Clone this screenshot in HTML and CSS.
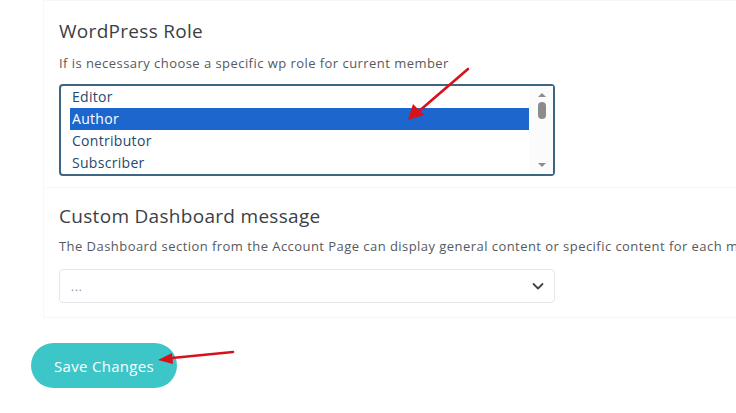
FILE: index.html
```html
<!DOCTYPE html>
<html lang="en">
<head>
    <meta charset="UTF-8">
    <meta name="viewport" content="width=device-width, initial-scale=1.0">
    <title>Member Settings</title>
    <link rel="stylesheet" href="styles.css">
</head>
<body>

<div class="page">
    <div class="section section-role">
        <h3>WordPress Role</h3>
        <p class="hint">If is necessary choose a specific wp role for current member</p>
        <div class="listbox">
            <ul class="options">
                <li>Editor</li>
                <li class="selected">Author</li>
                <li>Contributor</li>
                <li>Subscriber</li>
            </ul>
            <div class="scrollbar">
                <span class="arrow-up"></span>
                <span class="thumb"></span>
                <span class="arrow-down"></span>
            </div>
        </div>
    </div>

    <div class="section section-dashboard">
        <h3>Custom Dashboard message</h3>
        <p class="hint">The Dashboard section from the Account Page can display general content or specific content for each member</p>
        <div class="dropdown">
            <span class="value">...</span>
            <svg class="chevron" width="14" height="14" viewBox="0 0 14 14">
                <path d="M2.5 5 L7 9.5 L11.5 5" fill="none" stroke="#444" stroke-width="1.8" stroke-linecap="round" stroke-linejoin="round"/>
            </svg>
        </div>
    </div>

    <button type="button" class="save-btn">Save Changes</button>

    <!-- annotation arrows drawn over the screenshot -->
    <svg class="annotations" width="736" height="413" viewBox="0 0 736 413">
        <line x1="468" y1="69" x2="418" y2="112" stroke="#d8121c" stroke-width="2.6" stroke-linecap="round"/>
        <polygon points="408,120 413,104 424,115" fill="#d8121c"/>
        <line x1="233" y1="352" x2="172" y2="358" stroke="#d8121c" stroke-width="2.6" stroke-linecap="round"/>
        <polygon points="158,360 172,353 173,364" fill="#d8121c"/>
    </svg>
</div>

</body>
</html>
```

FILE: styles.css
```css
body {
    font-family: "Open Sans", Arial, sans-serif;
    background-color: #fff;
    margin: 0;
    overflow: hidden;
    width: 736px;
    height: 413px;
}

.page {
    position: relative;
    width: 736px;
    height: 413px;
    overflow: hidden;
}

.section {
    margin-left: 43px;
    width: 760px;
    padding: 0 15px;
    border: 1px solid #f6f7f9;
    border-right: none;
    box-sizing: border-box;
}

.section-role {
    padding-top: 18px;
    padding-bottom: 11px;
}

.section-dashboard {
    border-top: none;
    padding-top: 16px;
    padding-bottom: 14px;
}

.section h3 {
    margin: 0;
    font-size: 19px;
    line-height: 24px;
    font-weight: 500;
    letter-spacing: 0.3px;
    color: #3b3f45;
}

.hint {
    margin: 10px 0 11px;
    font-size: 13px;
    line-height: 20px;
    letter-spacing: 0.45px;
    color: #555a5f;
    white-space: nowrap;
}

.section-dashboard .hint {
    margin: 8px 0 13px;
}

.listbox {
    display: flex;
    width: 496px;
    height: 92px;
    border: 2px solid #3d6682;
    border-radius: 4px;
    box-sizing: border-box;
    background-color: #fff;
}

.options {
    list-style: none;
    margin: 0;
    padding: 0 0 0 9px;
    flex: 1;
}

.options li {
    height: 22px;
    line-height: 22px;
    padding-left: 2px;
    font-size: 14px;
    letter-spacing: 0.3px;
    color: #244a6c;
}

.options li.selected {
    background-color: #1d66cd;
    color: #fff;
}

.scrollbar {
    position: relative;
    width: 22px;
    background-color: #fbfbfb;
    display: flex;
    flex-direction: column;
    align-items: center;
    padding-left: 2px;
}

.arrow-up,
.arrow-down {
    width: 0;
    height: 0;
    border-left: 4px solid transparent;
    border-right: 4px solid transparent;
}

.arrow-up {
    margin-top: 7px;
    border-bottom: 4px solid #8c8c8c;
}

.arrow-down {
    margin-top: auto;
    margin-bottom: 7px;
    border-top: 4px solid #8c8c8c;
}

.thumb {
    margin-top: 5px;
    width: 8px;
    height: 17px;
    border-radius: 4px;
    background-color: #8c8c8c;
}

.dropdown {
    display: flex;
    align-items: center;
    justify-content: space-between;
    width: 496px;
    height: 34px;
    padding: 0 9px 0 11px;
    border: 1px solid #e3e7ec;
    border-radius: 4px;
    box-sizing: border-box;
}

.dropdown .value {
    font-size: 11px;
    color: #777;
    letter-spacing: 1px;
}

.save-btn {
    display: block;
    margin: 25px 0 0 31px;
    width: 146px;
    height: 45px;
    border: none;
    border-radius: 23px;
    background-color: #3dc6c8;
    color: #fff;
    font-family: "Open Sans", Arial, sans-serif;
    font-size: 15px;
    font-weight: 500;
    letter-spacing: 0.3px;
    cursor: pointer;
}

.annotations {
    position: absolute;
    left: 0;
    top: 0;
    pointer-events: none;
}
```
